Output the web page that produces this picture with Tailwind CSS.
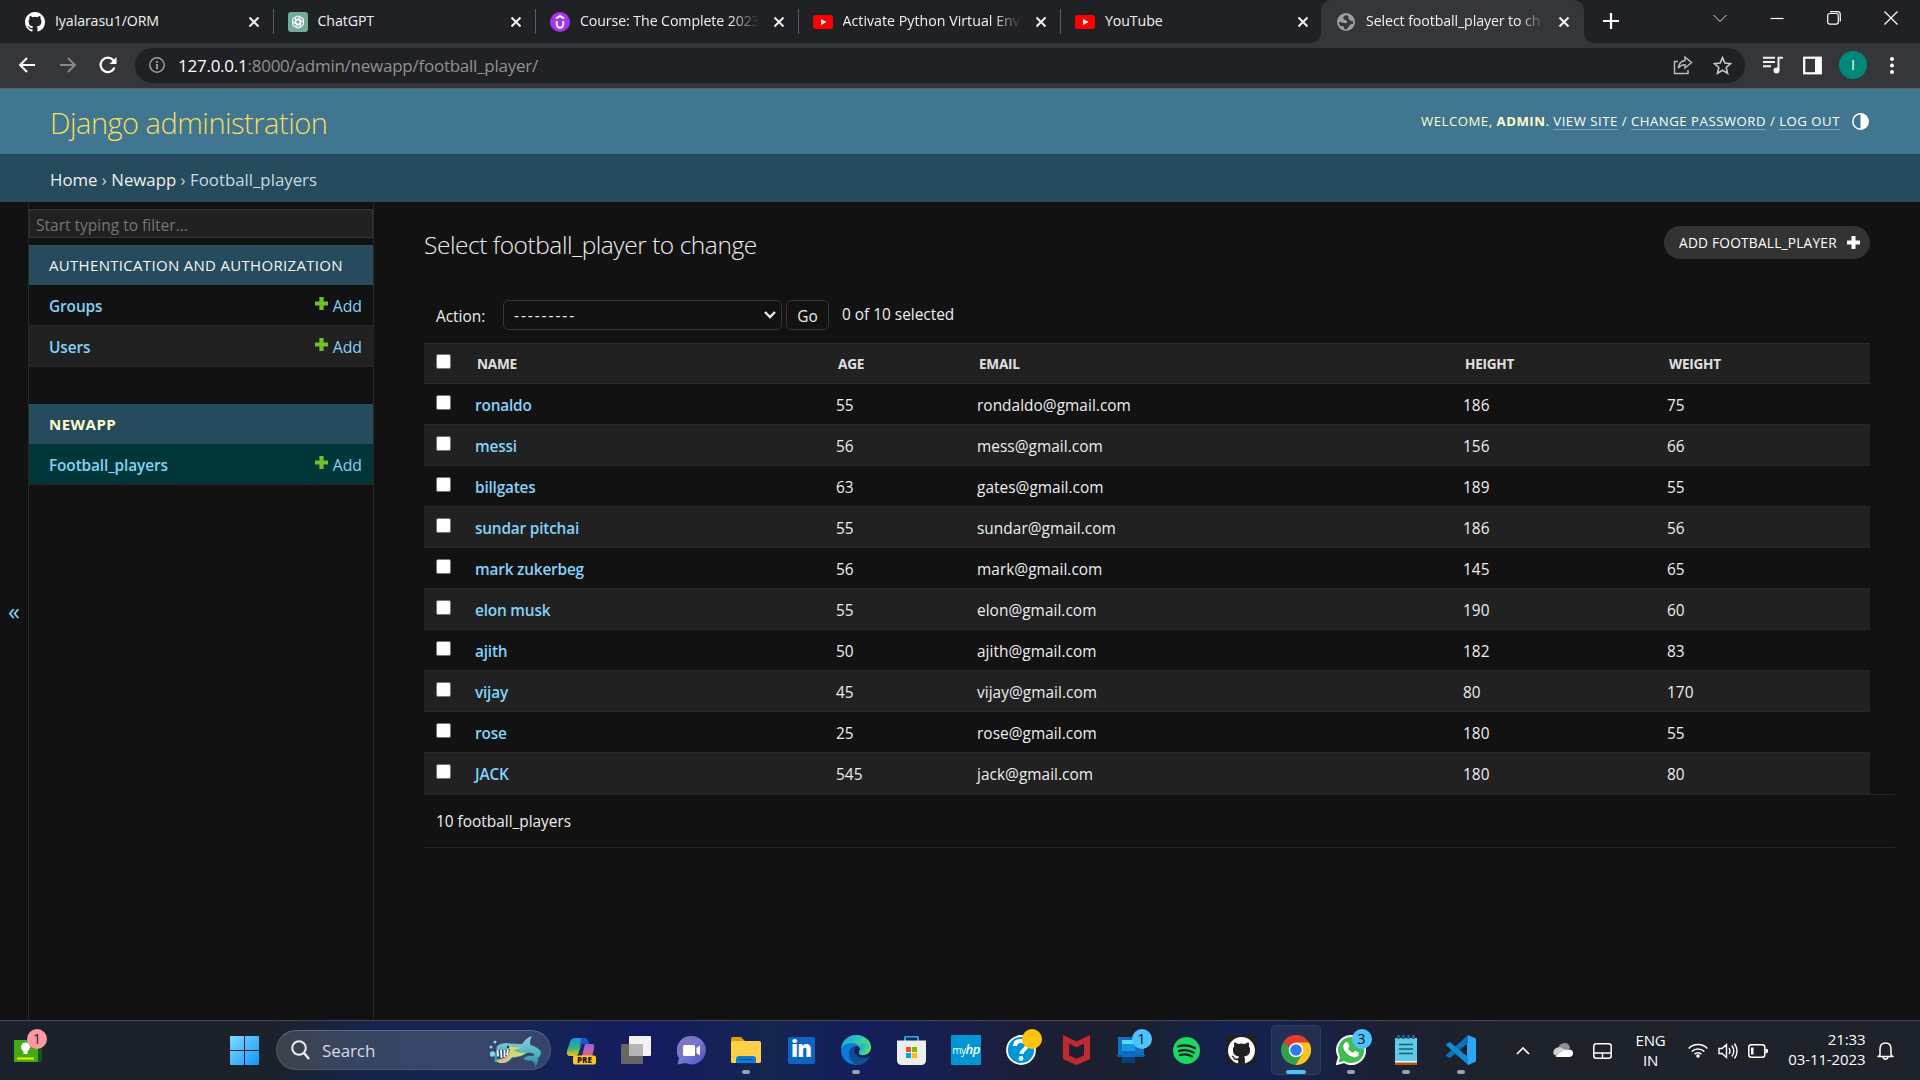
<!DOCTYPE html>
<html lang="en">
<head>
<meta charset="utf-8">
<title>Select football_player to change</title>
<script src="https://cdn.jsdelivr.net/npm/@tailwindcss/browser@4"></script>
</head>
<body class="w-[1920px] h-[1080px] overflow-hidden bg-[#121212] font-['Open_Sans','Noto_Sans',sans-serif] text-[15.4px] text-[#eeeeee] flex flex-col">

<svg class="hidden">
  <symbol id="x" viewBox="0 0 12 12"><path d="M1.5 1.5l9 9M10.500 1.5l-9 9" stroke="#f1f1f1" stroke-width="2" fill="none"/></symbol>
  <symbol id="gh" viewBox="0 0 16 16"><path d="M8 0C3.580 0 0 3.580 0 8c0 3.540 2.290 6.530 5.470 7.590.4.070.55-.17.55-.38 0-.19-.01-.82-.01-1.490-2.010.37-2.530-.49-2.690-.94-.09-.23-.48-.94-.82-1.130-.28-.15-.68-.52-.01-.53.63-.01 1.080.58 1.230.82.72 1.210 1.870.87 2.330.66.070-.52.280-.87.510-1.070-1.780-.2-3.640-.89-3.640-3.950 0-.87.310-1.590.820-2.150-.08-.2-.36-1.020.08-2.120 0 0 .67-.21 2.200.82a7.600 7.600 0 0 1 4 0c1.530-1.040 2.200-.82 2.200-.82.44 1.100.16 1.920.08 2.120.51.56.82 1.270.82 2.150 0 3.070-1.870 3.750-3.650 3.950.29.25.54.73.54 1.480 0 1.070-.01 1.930-.01 2.200 0 .21.15.46.55.38A8 8 0 0 0 16 8c0-4.420-3.580-8-8-8z"/></symbol>
  <symbol id="yt" viewBox="0 0 20 14"><rect width="20" height="14" rx="3" fill="#f00"/><path d="M8 4l5.500 3L8 10z" fill="#fff"/></symbol>
  <symbol id="add" viewBox="0 0 13 13"><path d="M6.500 0v13M0 6.500h13" stroke="#70bf2b" stroke-width="4.200"/></symbol>
</svg>

<!-- tab strip -->
<div class="h-[43px] bg-[#202124] flex shrink-0 text-[14.2px] text-[#f1f1f1] pl-[11px]">
  <div class="w-[262.5px] h-[43px] flex items-center pl-[14px] shrink-0">
    <svg class="w-5 h-5 fill-white"><use href="#gh"/></svg>
    <span class="ml-[10px] w-[142px] whitespace-nowrap pb-[2px] tracking-[-0.1px]">Iyalarasu1/ORM</span>
    <svg class="w-3 h-3 ml-[51px]"><use href="#x"/></svg>
    <i class="w-px h-[25px] bg-[#5d5e62] ml-auto"></i>
  </div>
  <div class="w-[262.5px] h-[43px] flex items-center pl-[14px] shrink-0">
    <svg class="w-5 h-5" viewBox="0 0 20 20"><rect width="20" height="20" rx="3" fill="#74aa9c"/><g fill="none" stroke="#fff" stroke-width="1.100"><path id="k" d="M10 7.500l2.600 1.500v4.200c0 2-2 3.300-3.800 2.400L6.500 14.200"/><use href="#k" transform="rotate(60 10 10)"/><use href="#k" transform="rotate(120 10 10)"/><use href="#k" transform="rotate(180 10 10)"/><use href="#k" transform="rotate(240 10 10)"/><use href="#k" transform="rotate(300 10 10)"/></g></svg>
    <span class="ml-[10px] w-[142px] whitespace-nowrap pb-[2px] tracking-[-0.1px]">ChatGPT</span>
    <svg class="w-3 h-3 ml-[50px]"><use href="#x"/></svg>
    <i class="w-px h-[25px] bg-[#5d5e62] ml-auto"></i>
  </div>
  <div class="w-[262.5px] h-[43px] flex items-center pl-[14px] shrink-0">
    <svg class="w-5 h-5" viewBox="0 0 20 20"><circle cx="10" cy="10" r="10" fill="#a435f0"/><path d="M6 6.500l4-2.500 4 2.500M6.800 9v3.500a3.200 3.200 0 0 0 6.400 0V9" fill="none" stroke="#fff" stroke-width="2"/></svg>
    <span class="ml-[10px] w-[179px] whitespace-nowrap pb-[2px] tracking-[-0.1px] mask-r-from-[84%] mask-r-to-[100%]">Course: The Complete 2023</span>
    <svg class="w-3 h-3 ml-[14px]"><use href="#x"/></svg>
    <i class="w-px h-[25px] bg-[#5d5e62] ml-auto"></i>
  </div>
  <div class="w-[262.5px] h-[43px] flex items-center pl-[14px] shrink-0">
    <svg class="w-5 h-[14px]"><use href="#yt"/></svg>
    <span class="ml-[10px] w-[179px] whitespace-nowrap pb-[2px] tracking-[0.02px] mask-r-from-[84%] mask-r-to-[100%]">Activate Python Virtual Env</span>
    <svg class="w-3 h-3 ml-[13px]"><use href="#x"/></svg>
    <i class="w-px h-[25px] bg-[#5d5e62] ml-auto"></i>
  </div>
  <div class="w-[262.5px] h-[43px] flex items-center pl-[14px] shrink-0">
    <svg class="w-5 h-[14px]"><use href="#yt"/></svg>
    <span class="ml-[10px] w-[142px] whitespace-nowrap pb-[2px] tracking-[-0.1px]">YouTube</span>
    <svg class="w-3 h-3 ml-[50px]"><use href="#x"/></svg>
  </div>
  <div class="relative w-[262.5px] h-[43px] flex items-center pl-[16px] -ml-[2.5px] shrink-0 bg-[#35363a] rounded-t-[10px]">
    <svg class="absolute -left-[10px] bottom-0 w-[10px] h-[10px]" viewBox="0 0 10 10"><path d="M10 0v10H0A10 10 0 0 0 10 0" fill="#35363a"/></svg>
    <svg class="absolute -right-[10px] bottom-0 w-[10px] h-[10px]" viewBox="0 0 10 10"><path d="M0 0v10h10A10 10 0 0 1 0 0" fill="#35363a"/></svg>
    <svg class="w-[18px] h-[18px]" viewBox="0 0 18 18"><circle cx="9" cy="9" r="9" fill="#9aa0a6"/><path d="M9.500 2C7 3 6 4 6.200 5.500 6.500 7 9 6.500 10 8c.8 1.200-.2 2-1.500 2.200C7 10.500 6.500 10 5.500 9.500L2 8.800c0 1.500.6 3.200 1.500 4.200h2.500c1 .5 1 2 1.500 3.200l2 .2c.5-1.500 1.500-2 2.500-3s.5-2 2-2.200l2-.2c.3-1 .2-2-.1-3-1 .5-2 .3-2.400-.5-.5-1-1.500-.5-2-1.500S12 4.500 11.500 3.500z" fill="#35363a"/></svg>
    <span class="ml-[11px] w-[178px] whitespace-nowrap pb-[2px] tracking-[-0.1px] mask-r-from-[86%] mask-r-to-[100%]">Select football_player to ch</span>
    <svg class="w-3 h-3 ml-[14px]"><use href="#x"/></svg>
  </div>
  <svg class="w-4 h-4 mt-[13px] ml-[19px] shrink-0" viewBox="0 0 16 16"><path d="M8 0v16M0 8h16" stroke="#fff" stroke-width="2.200"/></svg>
  <div class="flex items-start pt-[11px] ml-auto pr-[22px] gap-[43px] shrink-0">
    <svg class="w-[14px] h-[14px]" viewBox="0 0 14 14"><path d="M.5 4L7 10.500 13.500 4" fill="none" stroke="#ddd"/></svg>
    <svg class="w-[14px] h-[14px]" viewBox="0 0 14 14"><path d="M.5 7.500h13" stroke="#fff" stroke-width="1.200"/></svg>
    <svg class="w-[14px] h-[14px]" viewBox="0 0 14 14"><rect x=".7" y="2.500" width="10.600" height="10.600" rx="2" fill="none" stroke="#fff" stroke-width="1.200"/><path d="M3 .7h7.500q2.800 0 2.800 2.800v7" fill="none" stroke="#fff" stroke-width="1.200"/></svg>
    <svg class="w-[14px] h-[14px]" viewBox="0 0 14 14"><path d="M.5.5l13 13M13.500.5l-13 13" stroke="#fff" stroke-width="1.200"/></svg>
  </div>
</div>

<!-- toolbar -->
<div class="h-[46px] bg-[#35363a] border-b border-[#5f6063] flex items-center shrink-0 pl-[18px] pb-px">
  <svg class="w-[18px] h-[18px]" viewBox="0 0 18 18"><path d="M17 9H2M9 2L2 9 9 16" fill="none" stroke="#fff" stroke-width="2"/></svg>
  <svg class="w-[18px] h-[18px] ml-[23px]" viewBox="0 0 18 18"><path d="M1 9H16M9 2L16 9 9 16" fill="none" stroke="#86878a" stroke-width="2"/></svg>
  <svg class="w-[18px] h-[18px] ml-[22px]" viewBox="0 0 18 18"><path d="M15.500 11.500A7.200 7.200 0 1 1 14.300 4.200L16 6" fill="none" stroke="#fff" stroke-width="2.200"/><path d="M17.500 1v7h-7z" fill="#fff"/></svg>
  <div class="ml-[18px] w-[1610px] h-[35px] rounded-full bg-[#202124] flex items-center pl-[14px] pr-[13px]">
    <svg class="w-4 h-4" viewBox="0 0 16 16"><circle cx="8" cy="8" r="7.200" fill="none" stroke="#9aa0a6" stroke-width="1.500"/><path d="M8 4v2M8 7v5.200" stroke="#9aa0a6" stroke-width="1.900"/></svg>
    <span class="ml-[13px] pt-px text-[17px] tracking-[-0.25px] text-[#919293]"><span class="text-white">127.0.0.1</span>:8000/admin/newapp/football_player/</span>
    <svg class="w-5 h-5 ml-auto" viewBox="0 0 20 20"><path d="M5 6.500H1.500v12h13.500V15M12 2l6.500 5.500L12 13V9.800c-3.200 0-5 1-6.700 3.400C5.800 9 8 6 12 5.500z" fill="none" stroke="#b8babd" stroke-width="1.500"/></svg>
    <svg class="w-[19px] h-[19px] ml-[20px]" viewBox="0 0 18 18"><path d="M9 1.500l2.200 5.200 5.500.5-4.200 3.700 1.300 5.500L9 13.500l-4.800 2.900 1.300-5.500L1.300 7.200l5.500-.5z" fill="none" stroke="#c6c8cb" stroke-width="1.500"/></svg>
  </div>
  <svg class="w-5 h-[18px] ml-[18px]" viewBox="0 0 20 18"><path d="M0 1.700h12M0 6h12M0 10.300h8M15.500 14V1.700H20" fill="none" stroke="#f1f1f1" stroke-width="2"/><circle cx="13.500" cy="14.500" r="3" fill="#f1f1f1"/></svg>
  <svg class="w-[19px] h-[19px] ml-[20px]" viewBox="0 0 19 19"><rect x="1.200" y="1.700" width="16.600" height="15.600" fill="none" stroke="#fff" stroke-width="2.200"/><path d="M12 1h6v17h-6z" fill="#fff"/></svg>
  <div class="w-7 h-7 rounded-full bg-[#00897b] ml-[17px] text-white text-[14px] leading-[28px] text-center">I</div>
  <svg class="w-1 h-[17px] ml-[23px]" viewBox="0 0 4 17"><g fill="#fff"><circle cx="2" cy="2" r="2"/><circle cx="2" cy="8.500" r="2"/><circle cx="2" cy="15" r="2"/></g></svg>
</div>

<!-- header -->
<header class="h-[65px] bg-[#417690] flex items-center justify-between shrink-0 pl-[50px] pr-[51px]">
  <h1 class="text-[29px] font-light text-[#f5dd5d] leading-[40px] pt-[3px] tracking-[-0.5px]">Django administration</h1>
  <div class="flex items-center text-[13.2px] text-[#ffffcc]">
    <div class="tracking-[0.5px] whitespace-pre leading-[16px] flex"><span>WELCOME, </span><b>ADMIN</b><span>. </span><span class="text-white border-b border-[#7d9fb2]">VIEW SITE</span><span> / </span><span class="text-white border-b border-[#7d9fb2]">CHANGE PASSWORD</span><span> / </span><span class="text-white border-b border-[#7d9fb2]">LOG OUT</span></div>
    <svg class="w-[17px] h-[17px] ml-[12px]" viewBox="0 0 17 17"><circle cx="8.500" cy="8.500" r="7.700" fill="none" stroke="#fff" stroke-width="1.500"/><path d="M8.500 1a7.500 7.500 0 0 1 0 15z" fill="#fff"/></svg>
  </div>
</header>
<nav class="h-[48px] bg-[#264b5d] shrink-0 pl-[50px] pt-[3px] leading-[46px] text-[16.8px] text-[#c4dce8] tracking-[0.01px]"><span class="text-[#f0f0f0]">Home</span> › <span class="text-[#f0f0f0]">Newapp</span> › Football_players</nav>

<!-- body -->
<div class="h-[818px] flex shrink-0">
  <div class="w-[29px] border-r border-[#272727] flex items-center justify-center text-[24px] text-[#81d4fa] pb-px">«</div>
  <aside class="w-[345px] border-r border-[#272727] pt-[7px]">
    <div class="h-[29px] border border-[#353535] bg-[#212121] text-[#757575] leading-[31px] pl-[6px] text-[15.500px]">Start typing to filter...</div>
    <div class="mt-[7px] h-[40px] bg-[#264b5d] text-[#f5f5f5] pl-5 leading-[41px] text-[15px] tracking-[0.31px] whitespace-nowrap">AUTHENTICATION AND AUTHORIZATION</div>
    <div class="h-[41px] border-b border-[#272727] flex items-center pl-5 pr-[11px] text-[#81d4fa]"><b class="font-semibold pt-[4px] mr-auto tracking-[-0.1px]">Groups</b><svg class="w-[13px] h-[13px] mb-[4px] mr-[5px]"><use href="#add"/></svg><span class="pt-[4px] text-[15.8px]">Add</span></div>
    <div class="h-[41px] border-b border-[#272727] bg-[#212121] flex items-center pl-5 pr-[11px] text-[#81d4fa]"><b class="font-semibold pt-[4px] mr-auto tracking-[-0.1px]">Users</b><svg class="w-[13px] h-[13px] mb-[4px] mr-[5px]"><use href="#add"/></svg><span class="pt-[4px] text-[15.8px]">Add</span></div>
    <div class="mt-[37px] h-[40px] bg-[#264b5d] text-[#ffffcc] font-bold pl-5 leading-[40px] text-[15px] tracking-[0.5px]">NEWAPP</div>
    <div class="h-[41px] border-b border-[#272727] bg-[#003638] flex items-center pl-5 pr-[11px] text-[#81d4fa]"><b class="font-semibold pt-[4px] mr-auto tracking-[-0.12px]">Football_players</b><svg class="w-[13px] h-[13px] mb-[4px] mr-[5px]"><use href="#add"/></svg><span class="pt-[4px] text-[15.8px]">Add</span></div>
  </aside>
  <main class="flex-1 pl-[50px] pt-[24px]">
    <div class="flex justify-between items-start pr-[50px] h-[74px]">
      <h2 class="text-[24.500px] font-light leading-[38px] tracking-[-0.46px] text-[#eeeeee]">Select football_player to change</h2>
      <div class="h-[33px] w-[206px] rounded-full bg-[#333333] flex items-center justify-between pl-[15px] pr-[10px] text-[13.7px] text-white whitespace-nowrap"><span class="tracking-[0.23px] pt-px">ADD FOOTBALL_PLAYER</span><svg class="w-[13px] h-[13px]" viewBox="0 0 13 13"><path d="M6.500 0v13M0 6.500h13" stroke="#fff" stroke-width="4"/></svg></div>
    </div>
    <div class="flex h-[43px] pl-3 items-start">
      <span class="w-[67px] pt-[5px]">Action:</span>
      <div class="w-[279px] h-[30px] border border-[#353535] rounded-[5px] flex items-center justify-between pl-[10px] pr-[5px]"><span class="tracking-[1.95px] pt-[2px]">---------</span><svg class="w-[12px] h-[8px]" viewBox="0 0 12 8"><path d="M1 1l5 5 5-5" fill="none" stroke="#eee" stroke-width="2.300"/></svg></div>
      <div class="w-[43px] h-[30px] border border-[#353535] rounded-[5px] ml-1 text-center leading-[31px]">Go</div>
      <span class="ml-[13px] pt-[3px]">0 of 10 selected</span>
    </div>
    <div class="w-[1446px] h-[41px] bg-[#212121] border-y border-[#2b2b2b] grid grid-cols-[51px_361px_141px_486px_204px_1fr] items-center text-[13.600px] font-bold text-[#e0e0e0] tracking-[-0.25px]">
      <i class="w-[15px] h-[15px] bg-white border border-[#767676] rounded-[2px] ml-[12px] mb-[5px]"></i><span class="pl-[2px] pt-px">NAME</span><span class="pl-[2px] pt-px">AGE</span><span class="pl-[2px] pt-px">EMAIL</span><span class="pl-[2px] pt-px">HEIGHT</span><span class="pl-[2px] pt-px">WEIGHT</span>
    </div>
    <div id="rows" class="w-[1446px]"></div>
    <div class="h-[54px] border-y border-[#252525] mr-[25px] pl-3 leading-[54px]">10 football_players</div>
  </main>
</div>
<script>
const players = [["ronaldo",55,"rondaldo@gmail.com",186,75],["messi",56,"mess@gmail.com",156,66],["billgates",63,"gates@gmail.com",189,55],["sundar pitchai",55,"sundar@gmail.com",186,56],["mark zukerbeg",56,"mark@gmail.com",145,65],["elon musk",55,"elon@gmail.com",190,60],["ajith",50,"ajith@gmail.com",182,83],["vijay",45,"vijay@gmail.com",80,170],["rose",25,"rose@gmail.com",180,55],["JACK",545,"jack@gmail.com",180,80]];
document.getElementById("rows").innerHTML = players.map(p => `<div class="h-[41px] border-b border-[#272727] even:bg-[#212121] grid grid-cols-[51px_361px_141px_486px_204px_1fr] items-center"><i class="w-[15px] h-[15px] bg-white border border-[#767676] rounded-[2px] ml-[12px] mb-[4px]"></i><b class="font-semibold text-[#81d4fa] pt-[4px] tracking-[-0.2px]">${p[0]}</b>${p.slice(1).map(v => `<span class="pt-[4px] tracking-[0.04px]">${v}</span>`).join("")}</div>`).join("");
</script>

<!-- taskbar -->
<footer class="h-[60px] shrink-0 border-t border-[#45474c] bg-[linear-gradient(90deg,#1c222b_14%,#15254a_19%,#142552_27%,#151c60_34%,#142650_40%,#141e5c_45%,#17204f_49%,#1d1f35_54%,#1c202e_59%,#142250_64%,#16224c_67%,#1c2034_72%,#1d222b_78%)] flex items-center">
  <div class="relative w-[28px] h-[22px] ml-[14px]">
    <svg class="w-7 h-[22px]" viewBox="0 0 28 22"><rect width="28" height="22" rx="2" fill="#0b5a1b"/><rect width="24" height="22" rx="1" fill="#45a814"/><circle cx="11.500" cy="7" r="4.500" fill="#fff"/><path d="M9.500 10h4v4h-4z" fill="#fff"/><path d="M3 18.500h17" stroke="#d6f000" stroke-width="2.200"/></svg>
    <span class="absolute -top-[11px] left-[13px] w-5 h-5 rounded-full bg-[#ff99a4] text-[#222] text-[14px] leading-[20px] text-center">1</span>
  </div>
  <svg class="w-[29px] h-[29px] ml-[188px]" viewBox="0 0 29 29"><defs><linearGradient id="w" x1="0" y1="0" x2="1" y2="1"><stop stop-color="#7fdcfb"/><stop offset="1" stop-color="#0f96fb"/></linearGradient></defs><path d="M0 1q0-1 1-1h13v14H0zM15 0h13q1 0 1 1v13H15zM0 15h14v14H1q-1 0-1-1zM15 15h14v13q0 1-1 1H15z" fill="url(#w)"/></svg>
  <div class="ml-[17px] w-[275px] h-10 rounded-full border border-white/10 border-t-white/20 bg-white/15 flex items-center pl-[14px] pr-2 mb-px">
    <svg class="w-[19px] h-[20px]" viewBox="0 0 19 20"><circle cx="8" cy="8" r="6.800" fill="none" stroke="#eee" stroke-width="2"/><path d="M13 13l5 6" stroke="#eee" stroke-width="2.400"/></svg>
    <span class="ml-[12px] pt-px text-[17px] text-[#d8dbe4] tracking-[-0.1px]">Search</span>
    <svg class="w-[53px] h-[31px] ml-auto mt-[3px]" viewBox="0 0 53 31"><defs><linearGradient id="sh" x1="0" y1="0" x2="0" y2="1"><stop stop-color="#8fd3e0"/><stop offset=".6" stop-color="#4fb0bf"/><stop offset="1" stop-color="#1d7f91"/></linearGradient></defs><path d="M8 10Q13 6 21 7.500L33 8Q37 2 43 0 40 5 41.500 9 49 11 52 16q0 4-3 6 1 5-3 9 0-5-4-6.500-4 1-8-1.500 4-4 9-3l3-1q-3-3-8-2-4 3-9 4l-6 1q-4 6-11 5l-7-1z" fill="url(#sh)"/><path d="M20 10q7 2 13 1-5 3-9 3 4 3 13 3-6 4-14 4-4 6-12 6l-4-2 7-3q5-3 6-12z" fill="#d6d76c"/><path d="M7 13q7 2 14 0-1 8-8 10l-5 .5z" fill="#1f4f70"/><path d="M8.500 13.500l.5 7M12 14l.5 8M15.500 14v7M19 13.500l-1 6" stroke="#f3fbff" stroke-width="1.800"/><path d="M8 23.500q8 0 12-6l1 2q-4 7-11 7z" fill="#e7b08c"/><circle cx="19" cy="11" r="1.200" fill="#234"/><circle cx="3.500" cy="18" r="2.700" fill="#8ed6ea"/><circle cx="2" cy="11" r="1.500" fill="#8ed6ea"/><circle cx="6" cy="6" r="1.500" fill="#8ed6ea"/></svg>
  </div>
  <div class="flex ml-[2.500px] h-[59px] pb-px">
    <div class="w-[55px] flex items-center justify-center"><svg class="w-[30px] h-[30px]" viewBox="0 0 30 30"><defs><linearGradient id="c1" x1="0" y1="0" x2="0" y2="1"><stop stop-color="#1f8fe8"/><stop offset=".55" stop-color="#30b57a"/><stop offset="1" stop-color="#f0c419"/></linearGradient><linearGradient id="c2" x1="0" y1="0" x2="0" y2="1"><stop stop-color="#9b5cf0"/><stop offset="1" stop-color="#fa6a50"/></linearGradient></defs><path d="M9 3h10q2 0 1 3l-2 1q-2 0-3 4l-2 6q-1 4-4 4H4q-4 0-3-5L4 7q1-4 5-4z" fill="url(#c1)"/><path d="M15 3h4q3 0 4 6h-5q-2 0-3 3l-1-1z" fill="#1c56cf"/><path d="M19 9h7q3 0 2 5l-3 11H12q2 0 3-4l2-9q.5-3 2-3z" fill="url(#c2)"/><path d="M16 9h3l-3 12h-4z" fill="#1a2a5a"/><rect x="7" y="20.500" width="23" height="9" rx="2" fill="#ffc91a"/><text x="18.500" y="28" font-size="8" font-weight="800" text-anchor="middle" fill="#1b1b1b">PRE</text></svg></div>
    <div class="w-[55px] flex items-center justify-center"><svg class="w-[30px] h-[28px]" viewBox="0 0 30 28"><rect x="0" y="8" width="22" height="20" rx="1" fill="#666"/><rect x="8" width="22" height="20" rx="1" fill="#f2f2f2"/><rect x="8" y="8" width="14" height="12" fill="#b5b5b5"/></svg></div>
    <div class="w-[55px] flex items-center justify-center"><svg class="w-[29px] h-[29px]" viewBox="0 0 29 29"><defs><linearGradient id="ch" x1="0" y1="0" x2="1" y2="1"><stop stop-color="#8d70b0"/><stop offset=".5" stop-color="#7378cf"/><stop offset="1" stop-color="#504cc0"/></linearGradient></defs><path d="M14.500 0a14.200 14.200 0 1 1-6 27L.5 28.500 2 22A14.200 14.200 0 0 1 14.500 0z" fill="url(#ch)"/><rect x="6" y="9" width="12" height="11" rx="1.500" fill="#fff"/><path d="M19.500 12l3.500-2.500v10L19.500 17z" fill="#fff"/></svg></div>
    <div class="relative w-[55px] flex items-center justify-center"><svg class="w-[30px] h-[28px]" viewBox="0 0 30 28"><path d="M0 3q0-2 2-2h8l4 4v6H0z" fill="#e0a000"/><rect y="5" width="30" height="22" rx="1.500" fill="#ffcf48"/><path d="M5 27v-4q0-3 3-3h14q3 0 3 3v4z" fill="#0f7fd4"/><path d="M8 23.500h14" stroke="#0a4f92" stroke-width="1.200"/></svg><i class="absolute bottom-[5px] w-2 h-1 rounded-full bg-[#9da1ae]"></i></div>
    <div class="w-[55px] flex items-center justify-center"><div class="w-[27px] h-[27px] bg-[#0a66c2] rounded-[2px] text-white font-extrabold text-[22px] leading-[23px] text-center tracking-[-1px]">in</div></div>
    <div class="relative w-[55px] flex items-center justify-center"><svg class="w-[30px] h-[30px]" viewBox="0 0 30 30"><defs><linearGradient id="e1" x1="0" y1="0" x2="1" y2=".6"><stop stop-color="#17a7dc"/><stop offset=".5" stop-color="#2dc3c0"/><stop offset="1" stop-color="#6be83f"/></linearGradient></defs><circle cx="15" cy="15" r="15" fill="#0c7bd6"/><path d="M0 14C1 5 8 0 15 0c9 0 15 6 15 12 0 5-4 8-8 8-3 0-4-1-4-2 0-2 1-2 1-4 0-4-5-6-9-6-5 0-9 3-10 6z" fill="url(#e1)"/><path d="M28 22c-6 3-14 0-15-6 0-2 1-4 2-5-5 0-7 4-7 8 0 6 5 11 10 11 4 0 8-3 10-8z" fill="#0f4b97"/><path d="M30 12c0 5-4 8-8 8-3 0-4-1-4-2 0-2 1-2 1-4 0-2-2-3-4-3-1 1-2 3-2 5 1 6 9 9 15 6l2-2z" fill="#13235b"/><path d="M19 14c0 2-1 2-1 4 0 1 1 2 4 2 4 0 8-3 8-8l-4-4-7 1z" fill="url(#e1)"/></svg><i class="absolute bottom-[5px] w-2 h-1 rounded-full bg-[#9da1ae]"></i></div>
    <div class="w-[55px] flex items-center justify-center"><svg class="w-[29px] h-[29px]" viewBox="0 0 29 29"><path d="M8 6V2q0-1.500 1.500-1.500h10Q21 .5 21 2v4" fill="none" stroke="#1fb4ee" stroke-width="1.900"/><path d="M0 4.500h29V24q0 5-5 5H5q-5 0-5-5z" fill="#eee"/><path d="M9 11h5v5H9z" fill="#f25022"/><path d="M15 11h5v5h-5z" fill="#7fba00"/><path d="M9 17h5v5H9z" fill="#00a4ef"/><path d="M15 17h5v5h-5z" fill="#ffb900"/></svg></div>
    <div class="w-[55px] flex items-center justify-center"><div class="w-[30px] h-[30px] bg-[#0096d6] rounded-[1px] text-white text-[10px] leading-[29px] text-center tracking-[-0.5px]">my<i class="text-[13px] font-semibold">hp</i></div></div>
    <div class="relative w-[55px] flex items-center justify-center"><svg class="w-[30px] h-[30px]" viewBox="0 0 30 30"><circle cx="15" cy="15" r="14" fill="#0096d6" stroke="#fff" stroke-width="1.800"/><path d="M9 11c0-4 3-5 6-5 4 0 6 2 6 4.500 0 4-5.500 4-5.500 8.500" fill="none" stroke="#fff" stroke-width="4"/><circle cx="15" cy="23.500" r="2.400" fill="#fff"/></svg><i class="absolute top-[8px] left-[28px] w-5 h-5 rounded-full bg-[#ffc30b]"></i></div>
    <div class="w-[55px] flex items-center justify-center"><svg class="w-[27px] h-[30px]" viewBox="0 0 27 30"><path d="M0 0l13.500 6.500L27 0v24l-13.500 6L0 24zM6 8.500v11.700l7.500 3.600 7.500-3.600V8.500l-7.500 3.700z" fill="#c02a2e" fill-rule="evenodd"/></svg></div>
    <div class="relative w-[55px] flex items-center justify-center"><svg class="w-[30px] h-[28px]" viewBox="0 0 30 28"><path d="M2 1h26v19H2z" fill="#1170c0"/><path d="M0 19h30l-2 2H2z" fill="#0b5da8"/><path d="M6 4h13v23H6z" fill="#1795e0"/><path d="M6 4h13v4H6z" fill="#50e0f5"/><path d="M6 15h13v6H6z" fill="#0a6cc4"/><path d="M6 21h13v6H6z" fill="#083f7d"/></svg><span class="absolute top-[8px] left-[28px] w-5 h-5 rounded-full bg-[#4cc2ff] text-[#111] text-[14px] leading-[20px] text-center">1</span></div>
    <div class="w-[55px] flex items-center justify-center"><svg class="w-[27px] h-[27px]" viewBox="0 0 27 27"><circle cx="13.500" cy="13.500" r="13.500" fill="#1ed760"/><path d="M5 9.500c6-2 12-1.300 17 1.500M6 14c5-1.500 10-1 14.500 1.600M7 18c4-1.200 8-.8 12 1.400" fill="none" stroke="#122" stroke-width="2.300" stroke-linecap="round"/></svg></div>
    <div class="w-[55px] flex items-center justify-center"><div class="w-[30px] h-[30px] bg-[#211f1f] flex items-center justify-center"><svg class="w-[27px] h-[27px] fill-white"><use href="#gh"/></svg></div></div>
    <div class="relative w-[55px] flex items-center justify-center"><div class="w-[50px] h-[50px] rounded-[5px] bg-white/6 border border-white/6 flex items-center justify-center"><svg class="w-[30px] h-[30px]" viewBox="0 0 30 30"><path d="M15 15L2 7.500A15 15 0 0 1 28 7.500z" fill="#e33b2e"/><path d="M2 7.500a15 15 0 0 0 12.500 22.500L21.500 18.700 15 15z" fill="#2fa34c"/><path d="M28 7.500H15L21.500 18.700 14.500 30A15 15 0 0 0 28 7.500z" fill="#fcc31e"/><circle cx="15" cy="15" r="7.300" fill="#fff"/><circle cx="15" cy="15" r="5.800" fill="#2f78f0"/></svg></div><i class="absolute bottom-[5px] w-5 h-1 rounded-full bg-[#4cc2ff]"></i></div>
    <div class="relative w-[55px] flex items-center justify-center"><svg class="w-[30px] h-[30px]" viewBox="0 0 30 30"><path d="M15 1a14 14 0 1 1-7 26l-7 2 2-7A14 14 0 0 1 15 1z" fill="#3fbd50" stroke="#fff" stroke-width="2"/><path d="M9 7.500l2.500-.5 2 4-1.500 2.200c1.200 2.200 2.500 3.400 5 4.600l2-2 4 2-.5 2.500c-1 2-3.500 2.500-6 1.500-5-2-7.500-4.500-9-8.500-.6-2.300 0-4.500 1.500-5.800z" fill="#fff"/></svg><i class="absolute bottom-[5px] w-2 h-1 rounded-full bg-[#9da1ae]"></i><span class="absolute top-[8px] left-[28px] w-5 h-5 rounded-full bg-[#4cc2ff] text-[#111] text-[14px] leading-[20px] text-center">3</span></div>
    <div class="relative w-[55px] flex items-center justify-center"><svg class="w-[22px] h-[30px]" viewBox="0 0 22 30"><path d="M0 26h22v4H0z" fill="#b4560e"/><path d="M0 25h22v2.500H0z" fill="#f5f5f5"/><path d="M0 3h22v23H0z" fill="#5fcbe4"/><path d="M4 9.500h14M4 14h14M4 18.500h14" stroke="#12637e" stroke-width="1.600"/><path d="M3.500 0v4M8.500 0v4M13.500 0v4M18.500 0v4" stroke="#176a8c" stroke-width="2.500"/></svg><i class="absolute bottom-[5px] w-2 h-1 rounded-full bg-[#9da1ae]"></i></div>
    <div class="relative w-[55px] flex items-center justify-center"><svg class="w-[30px] h-[30px]" viewBox="0 0 30 30"><path d="M22 0l8 3.500v23L22 30 21 24V6z" fill="#2aa6f2"/><path d="M22 0v8L4 23 1 21.500q-1.500-1 0-2.500z" fill="#0b72bb"/><path d="M22 30v-8L4 7 1 8.500q-1.500 1 0 2.500z" fill="#1488d2"/></svg><i class="absolute bottom-[5px] w-2 h-1 rounded-full bg-[#9da1ae]"></i></div>
  </div>
  <!-- tray -->
  <div class="flex items-center ml-[27px] text-white">
    <svg class="w-[14px] h-2" viewBox="0 0 14 8"><path d="M1 7l6-6 6 6" fill="none" stroke="#fff" stroke-width="1.700"/></svg>
    <svg class="w-5 h-[14px] ml-[23px] mb-px" viewBox="0 0 20 14"><path d="M5 6q1-6 7-6 4 0 5 5l-6 5z" fill="#8d8f93"/><path d="M1 12q-2-5 2-7 4-2 8 1l6 4z" fill="#cfcfd1"/><path d="M2 13l10-6q8-2 8 3 0 4-4 4H4z" fill="#fff"/></svg>
    <svg class="w-[19px] h-4 ml-[20px]" viewBox="0 0 19 16"><rect x=".8" y=".8" width="17.400" height="14.400" rx="2.500" fill="none" stroke="#fff" stroke-width="1.500"/><path d="M1 10h17M9.500 10v5" stroke="#fff" stroke-width="1.400"/></svg>
    <div class="w-[40px] ml-[19px] text-center text-[15px] leading-[20px] tracking-[-0.2px] pb-[2px]">ENG<br>IN</div>
    <svg class="w-5 h-[15px] ml-[17px] mb-px" viewBox="0 0 20 15"><g fill="none" stroke="#fff" stroke-width="1.500"><path d="M.7 5.500a13 13 0 0 1 18.600 0M3.700 8.500a9 9 0 0 1 12.600 0M6.500 11.300a5 5 0 0 1 7 0"/></g><circle cx="10" cy="13" r="1.800" fill="#fff"/></svg>
    <svg class="w-5 h-[18px] ml-[10px]" viewBox="0 0 20 18"><g fill="none" stroke="#fff" stroke-width="1.400"><path d="M1 6.500h3l4.500-4v13L4 11.500H1zM11 6q2 3 0 6M13.800 3.500q4 5.500 0 11M16.500 1.500q5 7.500 0 15"/></g></svg>
    <svg class="w-5 h-[14px] ml-[10px]" viewBox="0 0 20 14"><rect x=".8" y=".8" width="16" height="12.400" rx="2.500" fill="none" stroke="#fff" stroke-width="1.500"/><path d="M3 3.500h2.500v7H3zM17.500 4.500l2.500 1v3l-2.500 1z" fill="#fff"/></svg>
    <div class="w-[98px] text-right text-[15px] leading-[20px] tracking-[-0.1px] pb-[3px]">21:33<br>03-11-2023</div>
    <svg class="w-[17px] h-[18px] ml-[11px]" viewBox="0 0 17 18"><path d="M3 13V7q0-6 5.500-6T14 7v6l2 1.500H1zM6 15q.5 2.200 2.500 2.200T11 15" fill="none" stroke="#fff" stroke-width="1.500" stroke-linejoin="round"/></svg>
  </div>
</footer>
</body>
</html>
